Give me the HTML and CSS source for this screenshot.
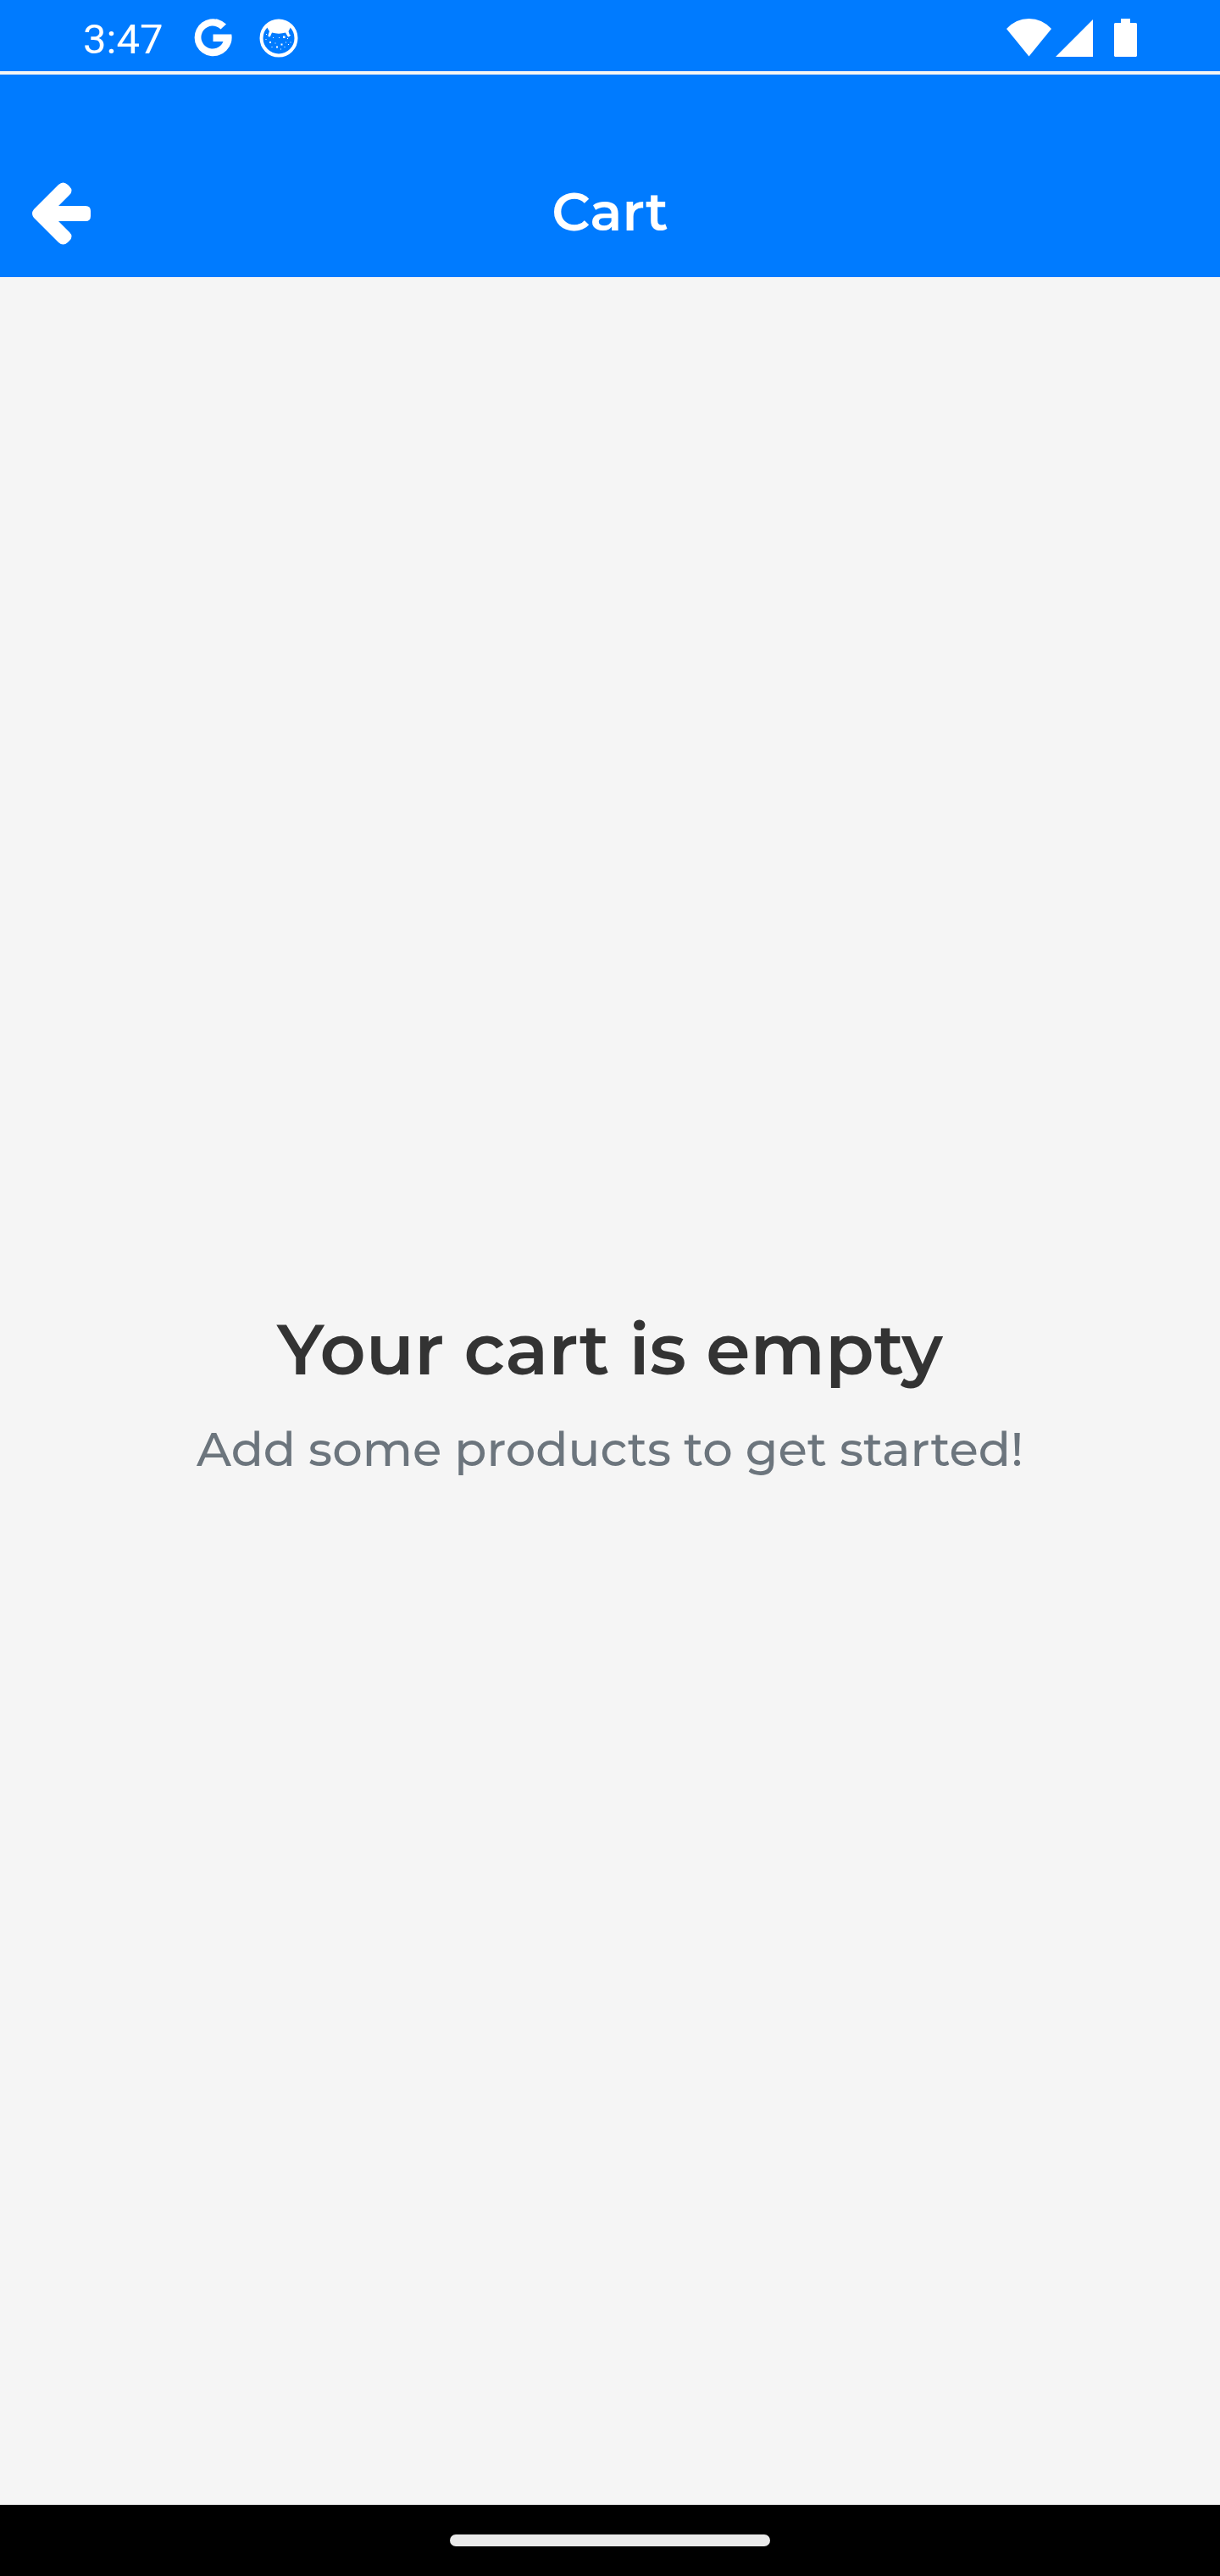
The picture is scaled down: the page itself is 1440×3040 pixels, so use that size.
FILE: index.html
```html
<!DOCTYPE html>
<html lang="en">
<head>
<meta charset="utf-8">
<meta name="viewport" content="width=device-width, initial-scale=1">
<title>Cart</title>
<link rel="stylesheet" href="styles.css">
</head>
<body>
<div class="screen">
  <div class="status-bar">
    <div class="status-group">
      <time class="clock">3:47</time>
      <svg class="status-icon icon-google" viewBox="0 0 46 46" aria-hidden="true">
        <path d="M38 6.500L31.500 12.500A13.500 13.500 0 1 0 34.500 27H22.500V18.500H44.300A22 22 0 1 1 38 6.500Z"/>
      </svg>
      <svg class="status-icon icon-cat" viewBox="0 0 46 46" aria-hidden="true">
        <circle cx="23" cy="23" r="20.500" fill="none" stroke="#fff" stroke-width="4"/>
        <path d="M9 10C12 5 18 3 23 3S34 5 37 10L34.500 15L36 19.500A1.500 1.500 0 0 1 33.500 21L31 16.500C26 18 20 18 15 16.500L13 21A1.500 1.500 0 0 1 10.500 19.500L12 15Z"/>
        <path d="M12 27h2v2h-2zM25.500 29.500h2v2h-2zM28 20.500h2.500v2.500h-2.500zM20 32.500h2v2h-2zM8 18h1v1h-1zM7.500 24h1v1h-1zM18.500 28.500h1v1h-1zM23 22h1v1h-1zM33 23h1v1h-1zM36.500 27.500h1v1h-1zM29.500 33h1v1h-1zM34 30h1v1h-1zM25 35.500h1v1h-1zM14.500 33h1v1h-1zM16 22h1v1h-1zM36 19h1v1h-1zM31 27.500h1v1h-1z"/>
      </svg>
    </div>
    <div class="status-group">
      <svg class="icon-wifi" viewBox="0 0 54 46" aria-hidden="true"><path d="M0 12Q11 0 26.500 0T53 12L26.500 44.500Z"/></svg>
      <svg class="icon-signal" viewBox="0 0 44 46" aria-hidden="true"><path d="M44 1V45H0Z"/></svg>
      <svg class="icon-battery" viewBox="0 0 27 46" aria-hidden="true"><path d="M8 0H19V5H26L27 6V44L26 45H1L0 44V6L1 5H8Z"/></svg>
    </div>
  </div>
  <header class="app-bar">
    <button class="back" type="button" aria-label="Back">
      <svg class="icon-back" viewBox="0 0 70 74" aria-hidden="true"><path d="M2 32L31 3Q36.500 -2 42 3L44 5Q49 10 44 15L31 28H63Q69 28 69 34V40Q69 46 63 46H31L44 59Q49 64 44 69L42 71Q36.500 76 31 71L2 42Q-2 37 2 32Z"/></svg>
    </button>
    <h1 class="page-title">Cart</h1>
  </header>
  <main class="empty-cart">
    <h2 class="empty-title">Your cart is empty</h2>
    <p class="empty-text">Add some products to get started!</p>
  </main>
  <div class="nav-bar"><div class="nav-handle"></div></div>
</div>
</body>
</html>
```
FILE: styles.css
```css
* { box-sizing: border-box; }

body {
  margin: 0;
  background: #f5f5f5;
  font-family: Montserrat, Inter, sans-serif;
}

svg { display: block; fill: #fff; }

.screen {
  display: flex;
  flex-direction: column;
  min-height: 100vh;
}

.status-bar {
  display: flex;
  justify-content: space-between;
  height: 84px;
  padding: 0 98px;
  background: #007bff;
  color: #fff;
}

.status-group {
  display: flex;
  align-items: center;
  padding-top: 5px;
}

.clock {
  padding-top: 4px;
  font: 49px/56px Roboto, sans-serif;
}

.status-icon { width: 46px; height: 46px; }
.icon-google { margin-left: 37px; }
.icon-cat { margin-left: 31px; }
.icon-wifi { width: 54px; height: 46px; }
.icon-signal { width: 44px; height: 46px; margin-left: 4px; }
.icon-battery { width: 27px; height: 46px; margin-left: 25px; }

.app-bar {
  display: grid;
  grid-template-columns: 1fr auto 1fr;
  align-items: center;
  margin-top: 4px;
  padding: 89px 24px 0;
  height: 239px;
  background: #007bff;
  color: #fff;
}

.back {
  justify-self: start;
  padding: 14px;
  border: 0;
  background: none;
  cursor: pointer;
}

.icon-back { width: 70px; height: 74px; }

.page-title {
  margin: 0;
  padding-bottom: 5px;
  font-size: 63px;
  line-height: 80px;
  font-weight: 600;
}

.empty-cart {
  flex: 1;
  display: flex;
  flex-direction: column;
  align-items: center;
  justify-content: center;
  gap: 32px;
  text-align: center;
}

.empty-title {
  margin: 0;
  color: #333;
  font-size: 84px;
  line-height: 104px;
  font-weight: 600;
}

.empty-text {
  margin: 0;
  color: #6c757d;
  font-size: 56px;
  line-height: 68px;
  font-weight: 500;
}

.nav-bar {
  display: flex;
  align-items: center;
  justify-content: center;
  height: 84px;
  background: #000;
}

.nav-handle {
  width: 378px;
  height: 14px;
  border-radius: 7px;
  background: #eaeaea;
}
```
